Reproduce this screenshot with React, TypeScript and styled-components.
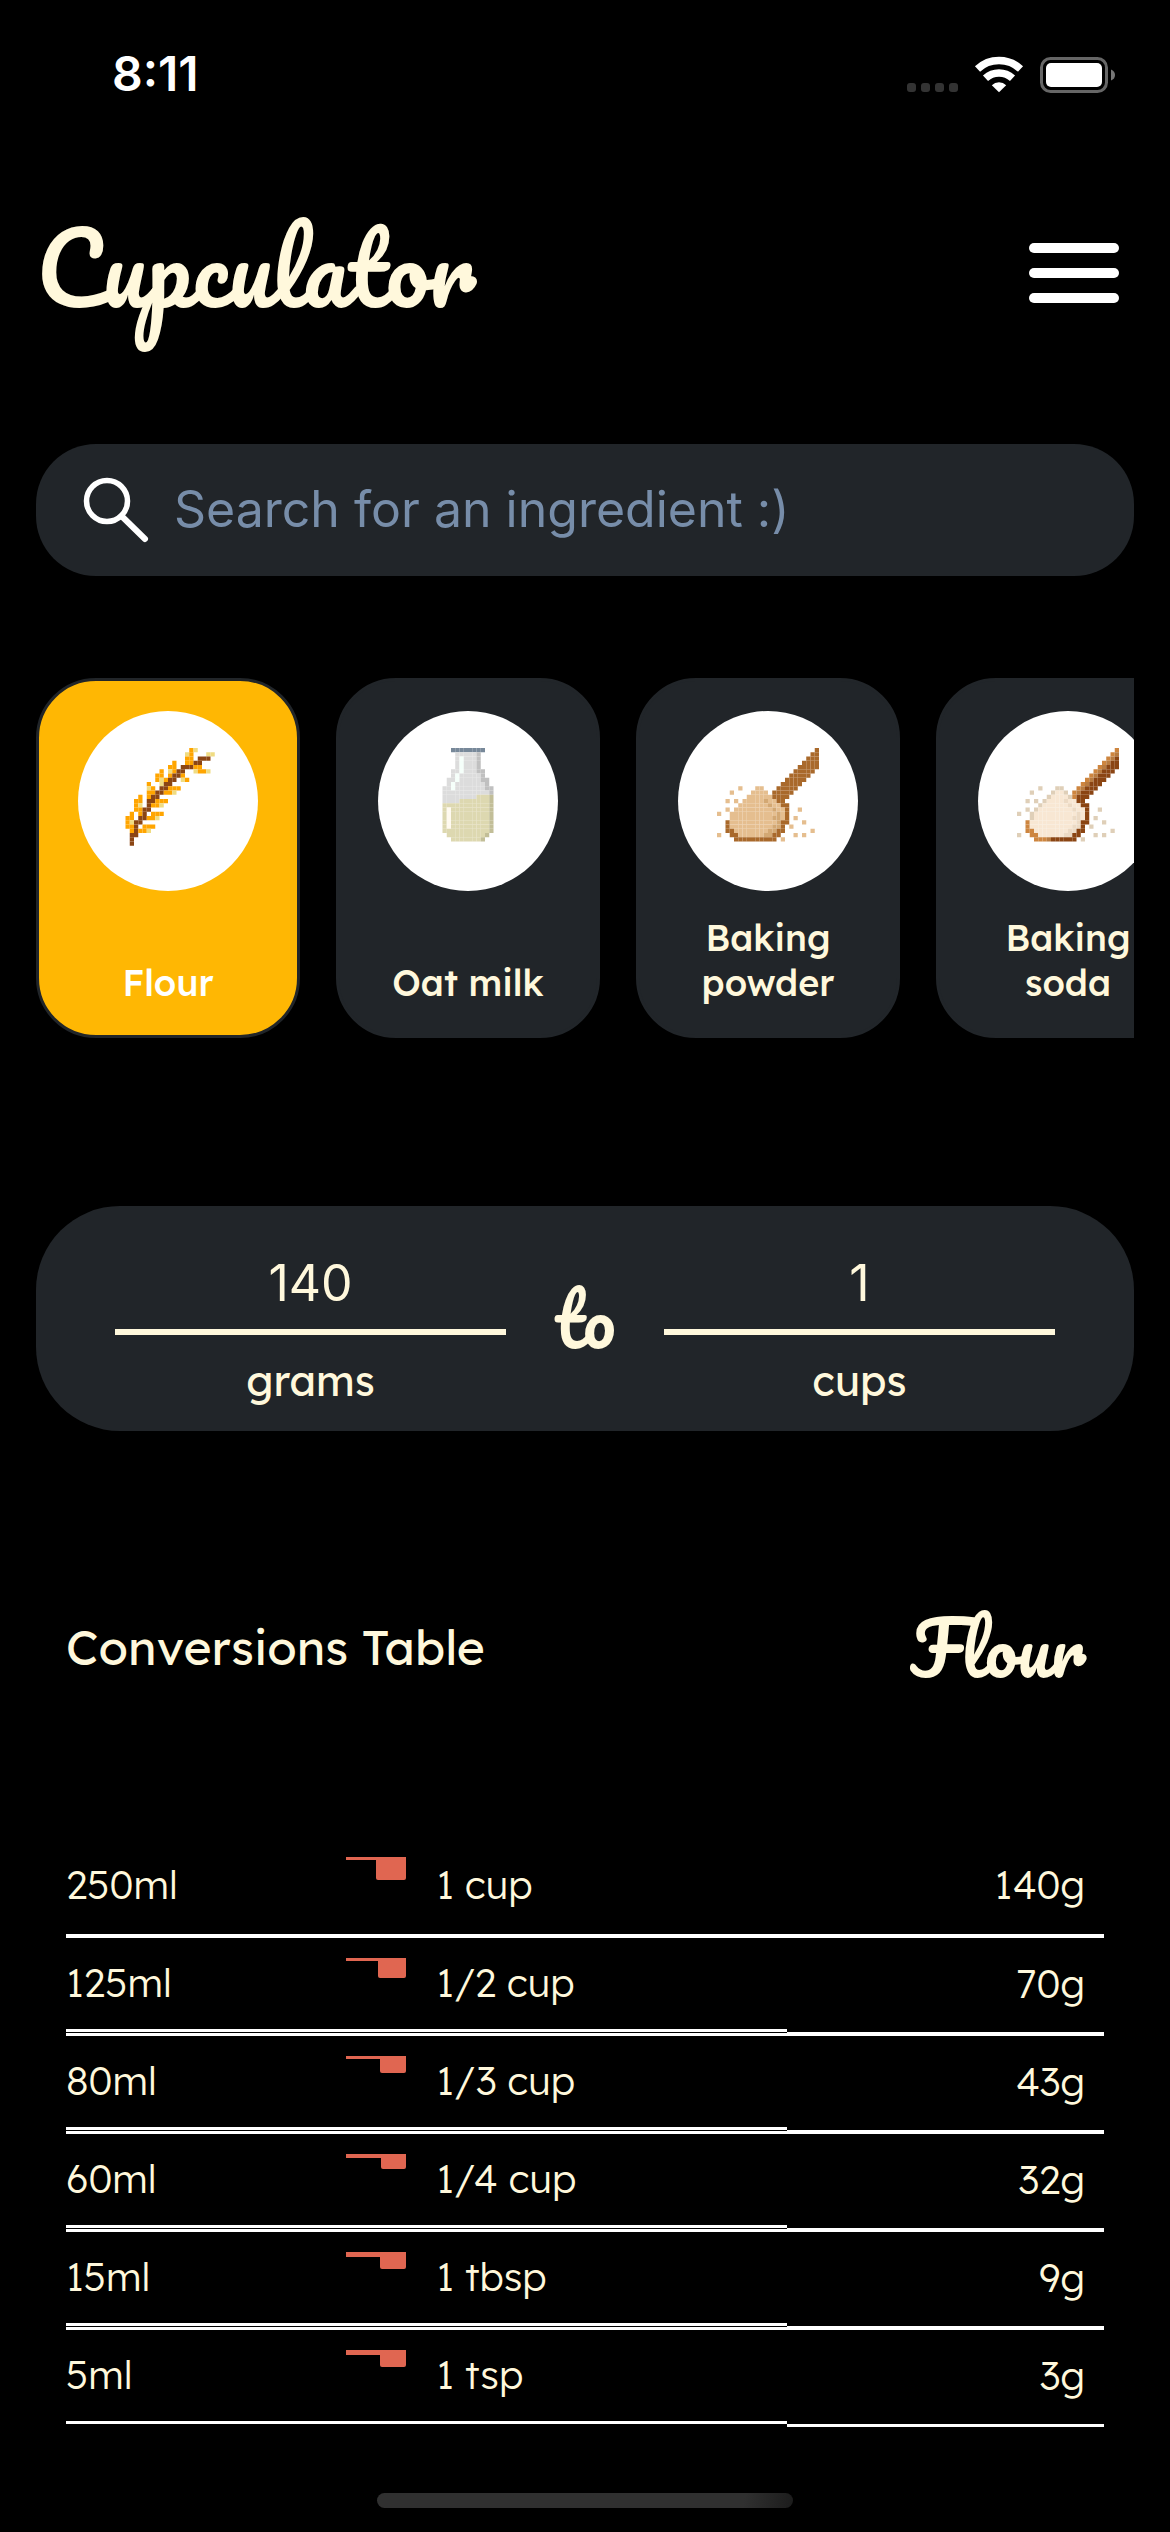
import React, { useState } from 'react';
import styled, { createGlobalStyle } from 'styled-components';

const color = {
  page: '#000000',
  surface: '#212529',
  cream: '#fff8dc',
  white: '#ffffff',
  amber: '#ffb703',
  placeholder: '#778da9',
  coral: '#e06651',
};

const bodyFont = `Lexend, Lato, "Noto Sans", sans-serif`;
const scriptFont = `Pacifico, "Liberation Serif", cursive`;
const systemFont = `Inter, "Liberation Sans", sans-serif`;

const GlobalStyle = createGlobalStyle`
  *, *::before, *::after { box-sizing: border-box; }
  body {
    margin: 0;
    background: ${color.page};
    color: ${color.cream};
    font-family: ${bodyFont};
  }
  button, input { font: inherit; color: inherit; border: 0; padding: 0; margin: 0; background: none; }
  button { cursor: pointer; }
`;

const Page = styled.div`
  display: flex;
  flex-direction: column;
  overflow: hidden;
`;

const StatusBar = styled.div`
  display: flex;
  align-items: center;
  justify-content: space-between;
  height: 141px;
  padding: 6px 54px 0 112px;
`;

const Clock = styled.time`
  font-family: ${systemFont};
  font-size: 48px;
  line-height: 56px;
  font-weight: 600;
  color: ${color.white};
`;

const StatusIcons = styled.svg`
  display: block;
  width: 210px;
  height: 40px;
`;

const Header = styled.header`
  display: flex;
  align-items: center;
  justify-content: space-between;
  height: 264px;
  padding: 0 51px 0 36px;
`;

const Logo = styled.h1`
  margin: 0;
  padding-bottom: 12px;
  font-family: ${scriptFont};
  font-size: 96px;
  line-height: 120px;
  font-weight: 400;
`;

const MenuButton = styled.button`
  display: flex;
  flex-direction: column;
  gap: 15px;
  width: 90px;
`;

const MenuBar = styled.span`
  height: 10px;
  border-radius: 5px;
  background: ${color.white};
`;

const Main = styled.main`
  display: flex;
  flex-direction: column;
  padding: 39px 36px 0;
`;

const SearchBox = styled.label`
  display: flex;
  align-items: center;
  gap: 24px;
  height: 132px;
  padding: 0 48px 0 46px;
  border-radius: 60px;
  background: ${color.surface};
`;

const SearchIcon = styled.svg`
  flex: none;
  width: 68px;
  height: 68px;
`;

const SearchInput = styled.input`
  flex: 1;
  min-width: 0;
  padding-bottom: 2px;
  font-family: ${systemFont};
  font-size: 50px;
  line-height: 64px;
  outline: none;
  &::placeholder { color: ${color.placeholder}; opacity: 1; }
`;

const Ingredients = styled.div`
  display: flex;
  gap: 36px;
  margin-top: 102px;
  overflow-x: auto;
  scrollbar-width: none;
`;

const IngredientCard = styled.button<{ $active: boolean }>`
  display: flex;
  flex: none;
  flex-direction: column;
  align-items: center;
  justify-content: space-between;
  width: 264px;
  height: 360px;
  padding: 30px 36px;
  border: 3px solid ${color.surface};
  border-radius: 60px;
  background: ${p => (p.$active ? color.amber : color.surface)};
  color: ${p => (p.$active ? color.white : color.cream)};
`;

const Disc = styled.span`
  display: flex;
  align-items: center;
  justify-content: center;
  width: 180px;
  height: 180px;
  padding-bottom: 4px;
  border-radius: 50%;
  background: ${color.white};
`;

const Sprite = styled.svg`
  width: 102px;
  height: 102px;
`;

const IngredientName = styled.span`
  font-size: 36px;
  line-height: 45px;
  font-weight: 500;
`;

const Converter = styled.section`
  display: flex;
  align-items: center;
  justify-content: space-between;
  height: 225px;
  margin-top: 168px;
  padding: 0 79px;
  border-radius: 84px;
  background: ${color.surface};
`;

const Amount = styled.label`
  display: flex;
  flex-direction: column;
  align-items: center;
  width: 391px;
  font-size: 42px;
  line-height: 56px;
`;

const AmountInput = styled.input`
  width: 100%;
  height: 107px;
  margin-bottom: 18px;
  padding-top: 8px;
  border-bottom: 6px solid ${color.cream};
  font-family: ${systemFont};
  font-size: 50px;
  font-weight: 400;
  text-align: center;
  outline: none;
`;

const Script = styled.span`
  font-family: ${scriptFont};
  font-size: 72px;
  line-height: 90px;
`;

const TableHeader = styled.div`
  display: flex;
  align-items: center;
  justify-content: space-between;
  height: 120px;
  margin-top: 157px;
  padding: 0 48px 0 30px;
`;

const TableTitle = styled.h2`
  margin: 0;
  padding-bottom: 2px;
  font-size: 48px;
  line-height: 60px;
  font-weight: 400;
`;

const Table = styled.table`
  display: block;
  margin: 129px 30px 0;
`;

const TableBody = styled.tbody`
  display: block;
`;

const Row = styled.tr`
  display: flex;
  align-items: flex-start;
  height: 98px;
  font-size: 39px;
  line-height: 48px;
  font-weight: 300;
  & + & { border-top: 3px solid ${color.white}; }
`;

const Cell = styled.td<{ $width: string }>`
  display: flex;
  align-items: center;
  width: ${p => p.$width};
  height: 94px;
  padding: 0 0 2px;
  border-bottom: 3px solid ${color.white};
  ${Row}:first-child & { height: 100px; }
`;

const MeasureCell = styled(Cell)`
  gap: 30px;
`;

const WeightCell = styled(Cell)`
  height: 97px;
  justify-content: flex-end;
  padding-right: 19px;
`;

const Scoop = styled.svg`
  flex: none;
  width: 60px;
  height: 24px;
  align-self: flex-start;
  margin-top: 20px;
`;

const HomeIndicator = styled.div`
  align-self: center;
  width: 416px;
  height: 15px;
  margin: 68px 0 24px;
  border-radius: 8px;
  background: linear-gradient(100deg, #303030 88%, #1c1c1c);
`;

type Palette = Record<string, string>;

const wheatRows = [
  '.................OK',
  '................KO...KK',
  '................OO.BBB',
  '.............O..OOBB',
  '............OO.BBBOO',
  '..........O.KOBB..KOOK',
  '.........OO.OBBO',
  '.........OKOBB.KO',
  '.......O..KBB',
  '.......KO.BBOOO',
  '.......OOBBOOK',
  '.....O.OBB',
  '....OO.BBOOO',
  '....OK.BOOK',
  '....OOBB',
  '...O.OB.OOO',
  '..OO.BBOOK',
  '..OKBB',
  '..OOB.OOO',
  '...OBOOK',
  '...BB',
  '...B',
  '...B',
];

const milkRows = [
  '........CCCCCCCC',
  '.........GGGGGD',
  '.........GWGGGD',
  '.........GWGGGD',
  '.........GWGGGD',
  '........GGWGGGDD',
  '........GWGGGGGD',
  '.......GGWGGGGGDD',
  '.......GWGGGGGGGD',
  '......GGWGGGGGGGDD',
  '......GGGGGGGGGGGD',
  '......GGGGGGGGYYYZ',
  '......GGGGYYYYYYYZ',
  '......YYYYYYYYYYYZ',
  '......YHYYYYYYYYYZ',
  '......YHYYYYYYYYYZ',
  '......YHYYYYYYYYYZ',
  '......YHYYYYYYYYYZ',
  '......YHYYYYYYYYYZ',
  '......YYYYYYYYYYYZ',
  '.......YYYYYYYYYZ',
  '........YYYYYYYZ',
];

const spoonRows = [
  '.......................L',
  '......................LM',
  '.....................LMD',
  '....................LMDD',
  '...................LMDDD',
  '..................LMDDD',
  '.................LMDDD',
  '................LMDDD',
  '...............LMDDD',
  '.....S...EE...LMDDD',
  '...S....EFFE.LMDDD',
  '.......EFFFFELDDD',
  '..S.S.EFFFFTFFDD',
  '.....EFFFFFFTFFDD',
  '..S.EFFFFFFFFTFFD..S',
  'S..EFFFFFFFFFFTFD',
  '...EFFFFFFFFFTTFD.S',
  '..LFFFFFFFFFFFTDD...S',
  '..LFFFFFFFFFFTTD.S',
  '..LLFFFFFFFFTTDD......S',
  'S..LLFFFFFFTTDD...S.S',
  '....LLLMDDDDDD.S',
];

const wheatColors: Palette = { O: '#ffa500', K: '#f0dc82', B: '#8b4513' };
const milkColors: Palette = {
  C: '#778899', G: '#dcdcdc', D: '#c0c0c0', W: '#f5fffa', Y: '#ddd8b0', Z: '#c2be98', H: '#fffaf0',
};
const powderColors: Palette = {
  L: '#a9692b', M: '#a9692b', D: '#a9692b', E: '#e5be8f', F: '#e5be8f', S: '#e5be8f', T: '#d3a873',
};
const sodaColors: Palette = {
  L: '#cd853f', M: '#b87b40', D: '#8b4513', E: '#dfcfb8', F: '#f8e7d3', S: '#dfcfb8', T: '#ecdac4',
};

const ingredients = [
  { name: 'Flour', rows: wheatRows, colors: wheatColors },
  { name: 'Oat milk', rows: milkRows, colors: milkColors },
  { name: 'Baking powder', rows: spoonRows, colors: powderColors },
  { name: 'Baking soda', rows: spoonRows, colors: sodaColors },
];

const conversions = [
  { volume: '250ml', measure: '1 cup', weight: '140g', bowl: 30, depth: 23, handle: 3 },
  { volume: '125ml', measure: '1/2 cup', weight: '70g', bowl: 28, depth: 20, handle: 3 },
  { volume: '80ml', measure: '1/3 cup', weight: '43g', bowl: 26, depth: 17, handle: 3 },
  { volume: '60ml', measure: '1/4 cup', weight: '32g', bowl: 25, depth: 15, handle: 4 },
  { volume: '15ml', measure: '1 tbsp', weight: '9g', bowl: 26, depth: 17, handle: 5 },
  { volume: '5ml', measure: '1 tsp', weight: '3g', bowl: 26, depth: 17, handle: 5 },
];

function PixelSprite({ rows, colors }: { rows: string[]; colors: Palette }) {
  return (
    <Sprite viewBox="0 0 24 24" aria-hidden="true">
      {rows.map((row, y) =>
        row.split('').map((cell, x) =>
          colors[cell] ? <rect key={`${x}-${y}`} x={x} y={y} width="1" height="1" fill={colors[cell]} /> : null,
        ),
      )}
    </Sprite>
  );
}

export default function App() {
  const [selected, setSelected] = useState('Flour');
  const [grams, setGrams] = useState('140');
  const [cups, setCups] = useState('1');

  return (
    <Page>
      <GlobalStyle />
      <StatusBar>
        <Clock>8:11</Clock>
        <StatusIcons viewBox="906 53 210 40" aria-hidden="true">
          {[907, 921, 935, 949].map(x => (
            <rect key={x} x={x} y="82" width="9" height="9" rx="3" fill="#333" />
          ))}
          <g fill="none" stroke="#fff">
            <path d="M977.5 68 A 31.500 31.500 0 0 1 1020.500 68" strokeWidth="7.500" />
            <path d="M985.500 77.200 A 20 20 0 0 1 1012.500 77.200" strokeWidth="7.500" />
          </g>
          <path d="M999 91.300 L991.800 84.200 A 10.500 10.500 0 0 1 1006.200 84.200 Z" fill="#fff" />
          <rect x="1041.500" y="57.500" width="65" height="33" rx="9" fill="none" stroke="#666" strokeWidth="3" />
          <rect x="1046" y="62" width="56" height="24" rx="5" fill="#fff" />
          <path d="M1111 68.500 Q1115 70 1115 74 Q1115 78 1111 79.500 Z" fill="#777" />
        </StatusIcons>
      </StatusBar>

      <Header>
        <Logo>Cupculator</Logo>
        <MenuButton type="button" aria-label="Menu">
          <MenuBar />
          <MenuBar />
          <MenuBar />
        </MenuButton>
      </Header>

      <Main>
        <SearchBox>
          <SearchIcon viewBox="0 0 68 68" fill="none" stroke="#fff" strokeLinecap="round" aria-hidden="true">
            <circle cx="25" cy="25" r="20.500" strokeWidth="5.500" />
            <path d="M39.500 40 L63 63" strokeWidth="6" />
          </SearchIcon>
          <SearchInput type="text" aria-label="Search" placeholder="Search for an ingredient :)" />
        </SearchBox>

        <Ingredients>
          {ingredients.map(item => (
            <IngredientCard
              key={item.name}
              type="button"
              $active={item.name === selected}
              aria-pressed={item.name === selected}
              onClick={() => setSelected(item.name)}
            >
              <Disc>
                <PixelSprite rows={item.rows} colors={item.colors} />
              </Disc>
              <IngredientName>{item.name}</IngredientName>
            </IngredientCard>
          ))}
        </Ingredients>

        <Converter>
          <Amount>
            <AmountInput inputMode="decimal" value={grams} onChange={e => setGrams(e.target.value)} />
            grams
          </Amount>
          <Script>to</Script>
          <Amount>
            <AmountInput inputMode="decimal" value={cups} onChange={e => setCups(e.target.value)} />
            cups
          </Amount>
        </Converter>

        <TableHeader>
          <TableTitle>Conversions Table</TableTitle>
          <Script>{selected}</Script>
        </TableHeader>

        <Table>
          <TableBody>
            {conversions.map(row => (
              <Row key={row.volume}>
                <Cell $width="27%">{row.volume}</Cell>
                <MeasureCell $width="42.5%">
                  <Scoop viewBox="0 0 60 24" fill={color.coral} aria-hidden="true">
                    <rect width="60" height={row.handle} />
                    <path
                      d={`M${60 - row.bowl} 0 H60 V${row.depth - 2} q0 2 -2 2 H${62 - row.bowl} q-2 0 -2 -2 Z`}
                    />
                  </Scoop>
                  {row.measure}
                </MeasureCell>
                <WeightCell $width="30.5%">{row.weight}</WeightCell>
              </Row>
            ))}
          </TableBody>
        </Table>
      </Main>

      <HomeIndicator />
    </Page>
  );
}
